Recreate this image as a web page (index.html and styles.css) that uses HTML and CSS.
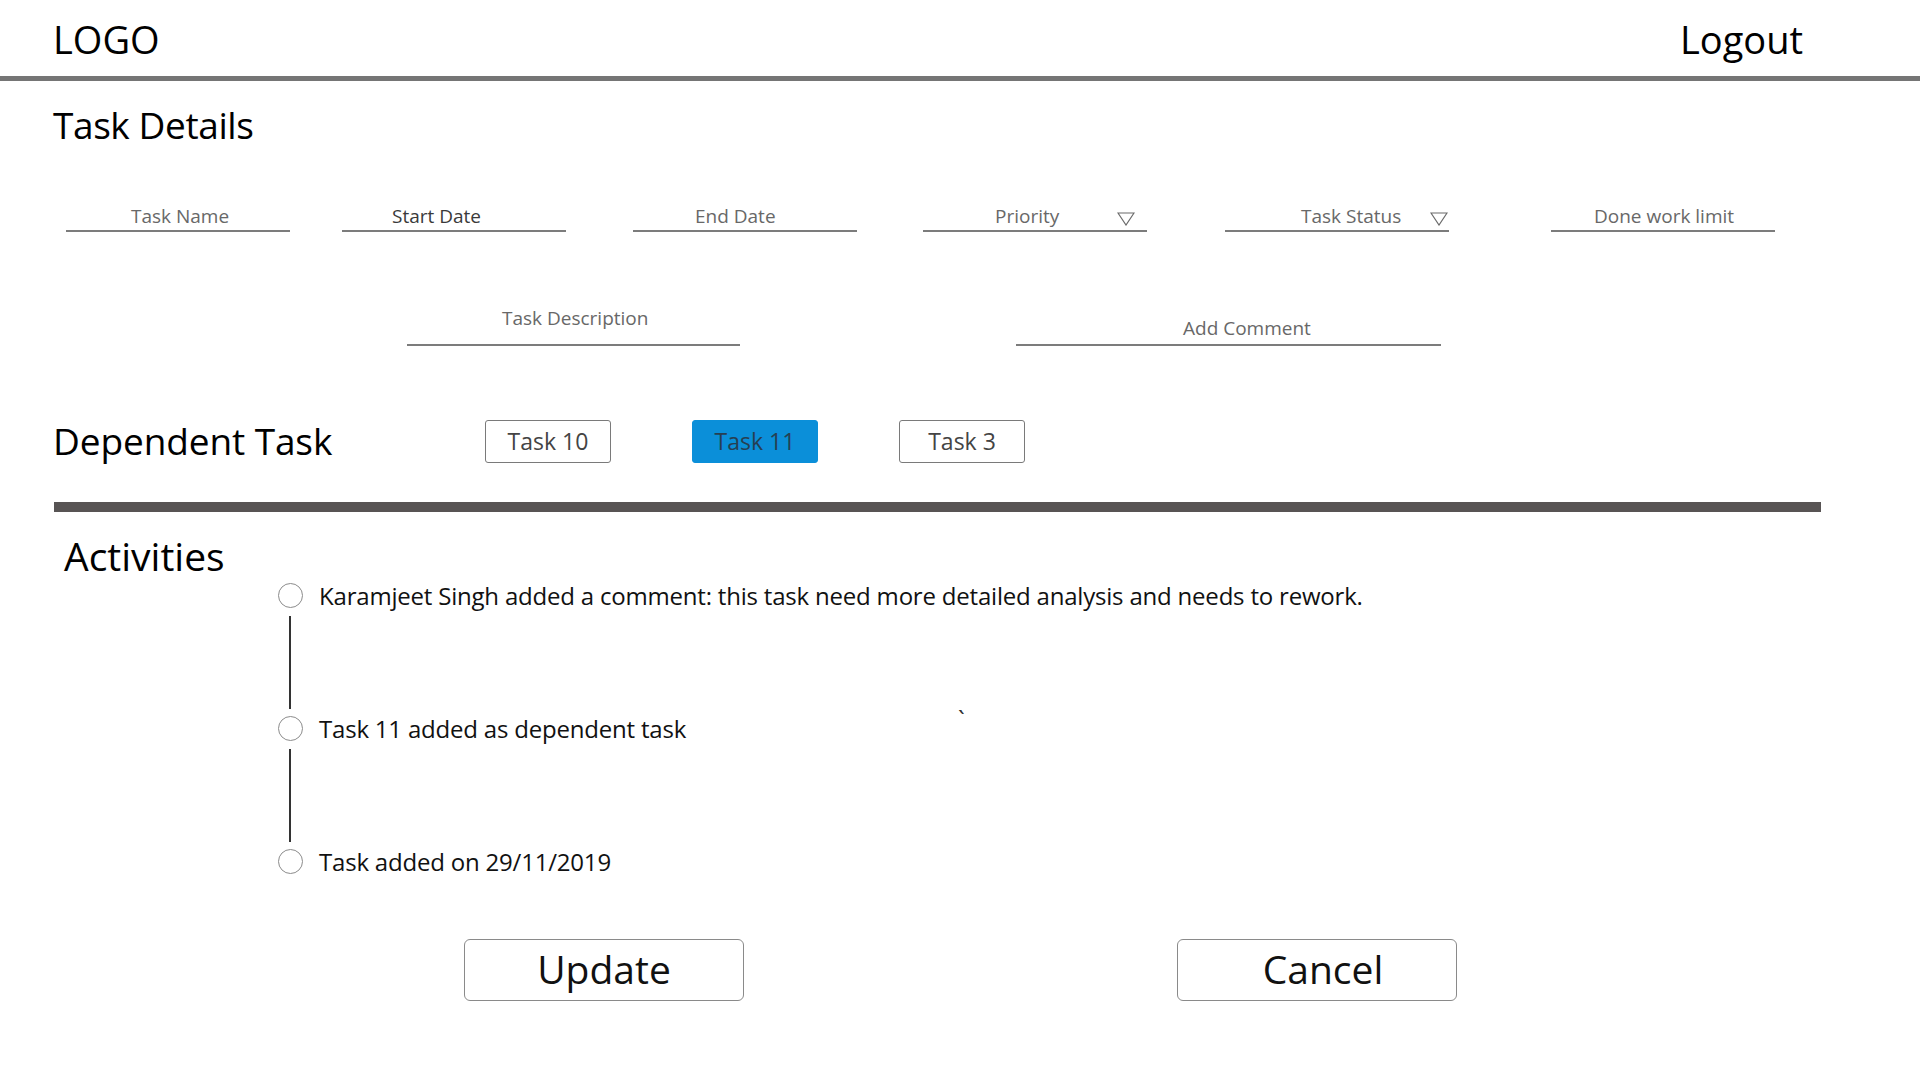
FILE: index.html
```html
<!DOCTYPE html>
<html lang="en">
<head>
<meta charset="utf-8">
<title>Task Details</title>
<link rel="stylesheet" href="styles.css">
</head>
<body>
<header class="topbar">
  <div class="logo">LOGO</div>
  <div class="logout">Logout</div>
</header>

<main class="page">
  <h1 class="page-title">Task Details</h1>

  <div class="fields-row">
    <div class="field f-name"><span class="label">Task Name</span></div>
    <div class="field f-start"><span class="label label-dark">Start Date</span></div>
    <div class="field f-end"><span class="label">End Date</span></div>
    <div class="field f-priority"><span class="label">Priority</span>
      <svg class="caret" width="18" height="14" viewBox="0 0 18 14"><polygon points="1,1 17,1 9,13" fill="none" stroke="#6a6a6a" stroke-width="1.2"/></svg>
    </div>
    <div class="field f-status"><span class="label">Task Status</span>
      <svg class="caret" width="18" height="14" viewBox="0 0 18 14"><polygon points="1,1 17,1 9,13" fill="none" stroke="#6a6a6a" stroke-width="1.2"/></svg>
    </div>
    <div class="field f-done"><span class="label">Done work limit</span></div>
  </div>

  <div class="desc-row">
    <div class="field f-desc"><span class="label">Task Description</span></div>
    <div class="field f-comment"><span class="label">Add Comment</span></div>
  </div>

  <div class="dep-row">
    <h2 class="dep-title">Dependent Task</h2>
    <div class="dep-tasks">
      <button class="task-chip">Task 10</button>
      <button class="task-chip active">Task 11</button>
      <button class="task-chip">Task 3</button>
    </div>
  </div>

  <div class="divider"></div>

  <h2 class="act-title">Activities</h2>

  <div class="timeline">
    <div class="tl-item"><span class="dot"></span><span class="tl-text">Karamjeet Singh added a comment: this task need more detailed analysis and needs to rework.</span></div>
    <div class="connector"></div>
    <div class="tl-item"><span class="dot"></span><span class="tl-text">Task 11 added as dependent task</span></div>
    <div class="connector"></div>
    <div class="tl-item"><span class="dot"></span><span class="tl-text">Task added on 29/11/2019</span></div>
    <span class="stray">`</span>
  </div>

  <div class="actions">
    <button class="action-btn">Update</button>
    <button class="action-btn btn-cancel">Cancel</button>
  </div>
</main>
</body>
</html>
```

FILE: styles.css
```css
* { box-sizing: border-box; }

html, body {
  margin: 0;
  padding: 0;
  background: #ffffff;
}

body {
  font-family: "Open Sans", "Noto Sans", "Liberation Sans", sans-serif;
  color: #000;
  width: 1920px;
  height: 1080px;
  overflow: hidden;
}

/* ---------- top bar ---------- */
.topbar {
  height: 81px;
  padding: 16px 117px 0 53px;
  display: flex;
  justify-content: space-between;
  align-items: flex-start;
  border-bottom: 5px solid #757575;
}

.logo, .logout {
  font-size: 38px;
  line-height: 46px;
  color: #000;
}

/* ---------- page ---------- */
.page {
  display: flex;
  flex-direction: column;
}

.page-title {
  margin: 21px 0 0 0;
  padding-left: 53px;
  font-size: 37px;
  line-height: 46px;
  letter-spacing: -0.4px;
  font-weight: 400;
}

/* ---------- fields ---------- */
.field {
  display: flex;
  align-items: flex-end;
  border-bottom: 2px solid #7c7c7c;
  padding-bottom: 2px;
  font-size: 19px;
  line-height: 24px;
  color: #686868;
}

.label { white-space: nowrap; }
.label-dark { color: #3a3a3a; }

.fields-row {
  display: flex;
  align-items: flex-end;
  margin-top: 56px;
  padding-left: 66px;
}

.fields-row .field { width: 224px; }

.f-name { padding-left: 65px; }
.f-start { margin-left: 52px; padding-left: 50px; }
.f-end { margin-left: 67px; padding-left: 62px; }
.f-priority { margin-left: 66px; padding-left: 72px; }
.f-status { margin-left: 78px; padding-left: 76px; }
.f-done { margin-left: 102px; padding-left: 43px; }

.caret {
  margin-left: auto;
  margin-bottom: 2px;
  flex: none;
}
.f-priority .caret { margin-right: 12px; }
.f-status .caret { margin-right: 1px; }

.desc-row {
  display: flex;
  align-items: flex-end;
  margin-top: 74px;
  padding-left: 407px;
}

.f-desc {
  width: 333px;
  padding-left: 95px;
  padding-bottom: 14px;
}

.f-comment {
  width: 425px;
  margin-left: 276px;
  padding-left: 167px;
  padding-bottom: 4px;
}

/* ---------- dependent task ---------- */
.dep-row {
  display: flex;
  align-items: center;
  margin-top: 72px;
  padding-left: 53px;
}

.dep-title {
  margin: 0;
  width: 432px;
  flex: none;
  font-size: 37px;
  line-height: 46px;
  letter-spacing: -0.1px;
  font-weight: 400;
}

.dep-tasks {
  display: flex;
  gap: 81px;
}

.task-chip {
  width: 126px;
  height: 43px;
  padding: 0;
  border: 1px solid #7a7a7a;
  border-radius: 3px;
  background: #fff;
  font-family: inherit;
  font-size: 23px;
  color: #444;
}

.task-chip.active {
  background: #0b8fd9;
  border-color: #0b8fd9;
  color: #263f52;
}

.divider {
  margin: 38px 0 0 54px;
  width: 1767px;
  height: 10px;
  background: #585454;
}

/* ---------- activities ---------- */
.act-title {
  margin: 21px 0 0 0;
  padding-left: 64px;
  font-size: 39px;
  line-height: 46px;
  font-weight: 400;
}

.timeline {
  position: relative;
  margin-top: 4px;
  padding-left: 278px;
  display: flex;
  flex-direction: column;
}

.tl-item {
  display: flex;
  align-items: center;
  height: 25px;
  gap: 16px;
}

.dot {
  width: 25px;
  height: 25px;
  border: 1px solid #8c8c8c;
  border-radius: 50%;
  flex: none;
  background: #fff;
}

.tl-text {
  font-size: 24px;
  line-height: 30px;
  letter-spacing: -0.2px;
  color: #111;
  white-space: nowrap;
}

.connector {
  width: 2px;
  height: 93px;
  margin: 8px 0 7px 11px;
  background: #333;
}

.stray {
  position: absolute;
  left: 958px;
  top: 124px;
  font-size: 24px;
  line-height: 24px;
  color: #333;
}

/* ---------- actions ---------- */
.actions {
  display: flex;
  gap: 433px;
  margin-top: 65px;
  padding-left: 464px;
}

.action-btn {
  width: 280px;
  height: 62px;
  padding: 0 0 4px 0;
  border: 1px solid #8a8a8a;
  border-radius: 6px;
  background: #fff;
  font-family: inherit;
  font-size: 39px;
  color: #111;
}

.btn-cancel { padding-left: 12px; }
```
